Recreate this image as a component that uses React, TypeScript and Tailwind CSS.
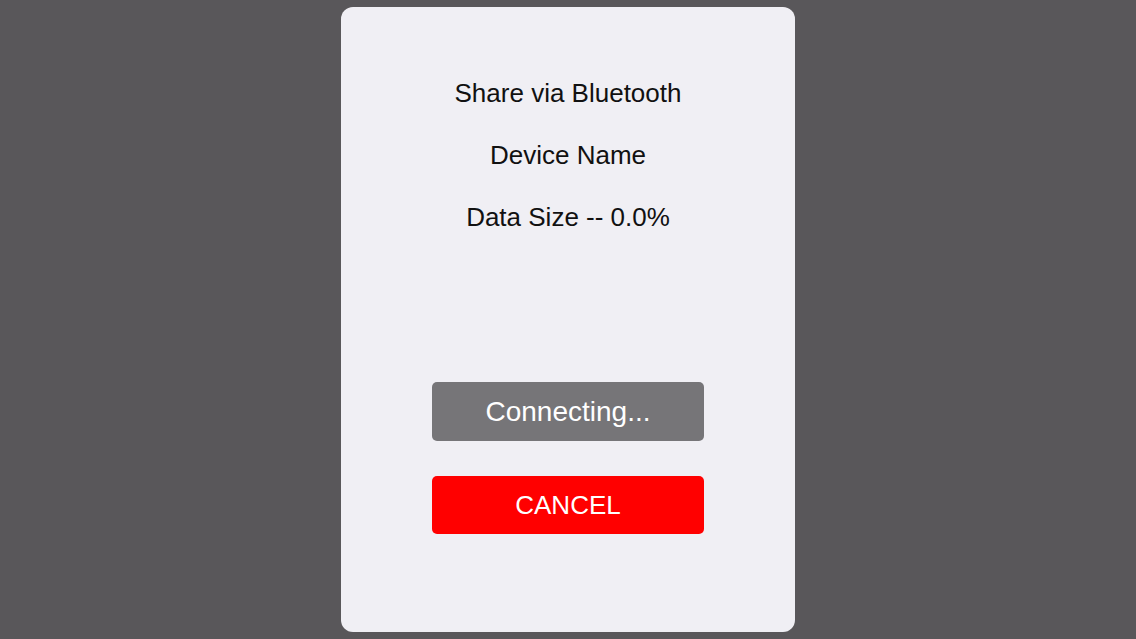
export default function App() {
  return (
    <div className="w-[1136px] h-[639px] bg-[#59575a] flex justify-center pt-[7px]" style={{ fontFamily: '"Liberation Sans", Arial, sans-serif' }}>
      <div className="w-[454px] h-[625px] bg-[#f0eff4] rounded-[12px] flex flex-col items-center">
        <div className="mt-[71px] flex flex-col items-center gap-[32px] text-[26px] leading-[30px] text-[#111]">
          <div>Share via Bluetooth</div>
          <div>Device Name</div>
          <div>Data Size -- 0.0%</div>
        </div>
        <div className="mt-[150px] w-[272px] h-[59px] rounded-[5px] bg-[#767578] flex items-center justify-center text-white text-[28px]">
          Connecting...
        </div>
        <div className="mt-[35px] w-[272px] h-[58px] rounded-[5px] bg-[#ff0000] flex items-center justify-center text-white text-[26px]">
          CANCEL
        </div>
      </div>
    </div>
  );
}
